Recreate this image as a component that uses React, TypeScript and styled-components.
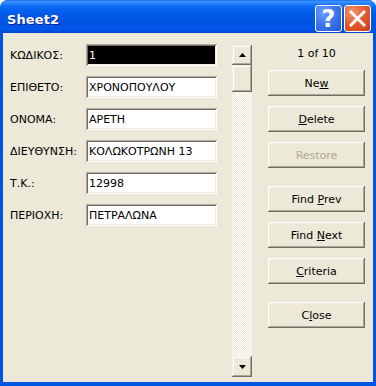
import React from "react";
import styled, { createGlobalStyle } from "styled-components";

const Global = createGlobalStyle`
  html, body { margin: 0; padding: 0; background: #ffffff; }
  * { box-sizing: border-box; }
`;

const Window = styled.div`
  width: 376px;
  height: 386px;
  display: flex;
  flex-direction: column;
  border-radius: 8px 8px 0 0;
  overflow: hidden;
  background: #0054e3;
  font-family: "DejaVu Sans", "Liberation Sans", sans-serif;
  font-size: 11px;
`;

const TitleBar = styled.div`
  height: 33px;
  flex: none;
  display: flex;
  align-items: flex-start;
  padding: 5px 5px 0 7px;
  gap: 2px;
  background: linear-gradient(
    to bottom,
    #0a5cf0 0px,
    #3d95ff 1px,
    #2a87fb 3px,
    #0f6ef6 6px,
    #0561ee 10px,
    #0258e6 16px,
    #0054e3 24px,
    #0057ea 29px,
    #0046d5 33px
  );
`;

const Title = styled.div`
  flex: 1;
  padding-top: 7px;
  color: #ffffff;
  font-family: "DejaVu Sans", sans-serif;
  font-weight: bold;
  font-size: 13px;
  text-shadow: 1px 1px 0 #0a1e8c;
  letter-spacing: 0.1px;
`;

const CapButton = styled.div<{ $kind: "help" | "close" }>`
  width: 27px;
  height: 27px;
  border: 1px solid #ffffff;
  border-radius: 3px;
  display: flex;
  align-items: center;
  justify-content: center;
  background: ${(p) =>
    p.$kind === "help"
      ? "radial-gradient(circle at 30% 25%, #6b9cff 0%, #3f78f0 45%, #2457d8 100%)"
      : "radial-gradient(circle at 30% 25%, #f0946e 0%, #e35a2e 50%, #c8401a 100%)"};
  color: #ffffff;
  font-family: "DejaVu Sans", sans-serif;
  font-weight: bold;
  font-size: 24px;
  line-height: 1;
`;

const Client = styled.div`
  flex: 1;
  margin: 0 3px 4px 3px;
  background: #ece9d8;
  display: flex;
  padding: 0 8px 0 7px;
`;

const FormColumn = styled.div`
  display: flex;
  flex-direction: column;
  gap: 10px;
  padding-top: 11px;
  width: 207px;
`;

const FieldRow = styled.div`
  display: flex;
  align-items: center;
  height: 22px;
`;

const Label = styled.div`
  width: 76px;
  color: #000000;
  white-space: nowrap;
`;

const Field = styled.div<{ $selected?: boolean }>`
  width: 131px;
  height: 22px;
  padding: 0 3px;
  display: flex;
  align-items: center;
  background: ${(p) => (p.$selected ? "#000000" : "#ffffff")};
  color: ${(p) => (p.$selected ? "#ffffff" : "#000000")};
  box-shadow: inset 1px 1px #aca899, inset -1px -1px #ffffff,
    inset 2px 2px #716f64, inset -2px -2px #f1efe2;
  white-space: nowrap;
  overflow: hidden;
`;

const ScrollBar = styled.div`
  width: 20px;
  margin: 12px 0 5px 15px;
  display: flex;
  flex-direction: column;
`;

const ScrollPart = styled.div<{ $h: number }>`
  height: ${(p) => p.$h}px;
  flex: none;
  background: #ece9d8;
  display: flex;
  align-items: center;
  justify-content: center;
  box-shadow: inset -1px -1px #716f64, inset 1px 1px #f1efe2,
    inset -2px -2px #aca899, inset 2px 2px #ffffff;
`;

const Track = styled.div`
  flex: 1;
  background-color: #ffffff;
  background-image: repeating-conic-gradient(#ece9d8 0 25%, #ffffff 0 50%);
  background-size: 2px 2px;
`;

const ButtonColumn = styled.div`
  width: 97px;
  margin-left: 16px;
  padding-top: 11px;
  display: flex;
  flex-direction: column;
`;

const Counter = styled.div`
  height: 19px;
  margin-bottom: 7px;
  display: flex;
  align-items: center;
  justify-content: center;
  color: #000000;
`;

const Button = styled.div<{ $gap: number; $disabled?: boolean }>`
  width: 97px;
  height: 26px;
  margin-top: ${(p) => p.$gap}px;
  display: flex;
  align-items: center;
  justify-content: center;
  background: #ece9d8;
  color: ${(p) => (p.$disabled ? "#aca899" : "#000000")};
  box-shadow: inset -1px -1px #716f64, inset 1px 1px #ffffff,
    inset -2px -2px #aca899, inset 2px 2px #f1efe2;
  white-space: nowrap;
`;

const Arrow = ({ down }: { down?: boolean }) => (
  <svg width="7" height="4" viewBox="0 0 7 4">
    <path d={down ? "M0 0H7L3.5 4Z" : "M0 4H7L3.5 0Z"} fill="#000" />
  </svg>
);

const fields: { label: string; value: string; selected?: boolean }[] = [
  { label: "ΚΩΔΙΚΟΣ:", value: "1", selected: true },
  { label: "ΕΠΙΘΕΤΟ:", value: "ΧΡΟΝΟΠΟΥΛΟΥ" },
  { label: "ΟΝΟΜΑ:", value: "ΑΡΕΤΗ" },
  { label: "ΔΙΕΥΘΥΝΣΗ:", value: "ΚΟΛΩΚΟΤΡΩΝΗ 13" },
  { label: "Τ.Κ.:", value: "12998" },
  { label: "ΠΕΡΙΟΧΗ:", value: "ΠΕΤΡΑΛΩΝΑ" },
];

export default function App() {
  return (
    <>
      <Global />
      <Window>
        <TitleBar>
          <Title>Sheet2</Title>
          <CapButton $kind="help">?</CapButton>
          <CapButton $kind="close">
            <svg width="19" height="19" viewBox="0 0 19 19">
              <path
                d="M3 3L16 16M16 3L3 16"
                stroke="#fff"
                strokeWidth="2.8"
                strokeLinecap="square"
              />
            </svg>
          </CapButton>
        </TitleBar>
        <Client>
          <FormColumn>
            {fields.map((f) => (
              <FieldRow key={f.label}>
                <Label>{f.label}</Label>
                <Field $selected={f.selected}>{f.value}</Field>
              </FieldRow>
            ))}
          </FormColumn>
          <ScrollBar>
            <ScrollPart $h={20}>
              <Arrow />
            </ScrollPart>
            <ScrollPart $h={27} />
            <Track />
            <ScrollPart $h={21}>
              <Arrow down />
            </ScrollPart>
          </ScrollBar>
          <ButtonColumn>
            <Counter>1 of 10</Counter>
            <Button $gap={0}>
              Ne<u>w</u>
            </Button>
            <Button $gap={10}>
              <u>D</u>elete
            </Button>
            <Button $gap={10} $disabled>
              Restore
            </Button>
            <Button $gap={18}>
              Find&nbsp;<u>P</u>rev
            </Button>
            <Button $gap={10}>
              Find&nbsp;<u>N</u>ext
            </Button>
            <Button $gap={10}>
              <u>C</u>riteria
            </Button>
            <Button $gap={18}>
              C<u>l</u>ose
            </Button>
          </ButtonColumn>
        </Client>
      </Window>
    </>
  );
}
